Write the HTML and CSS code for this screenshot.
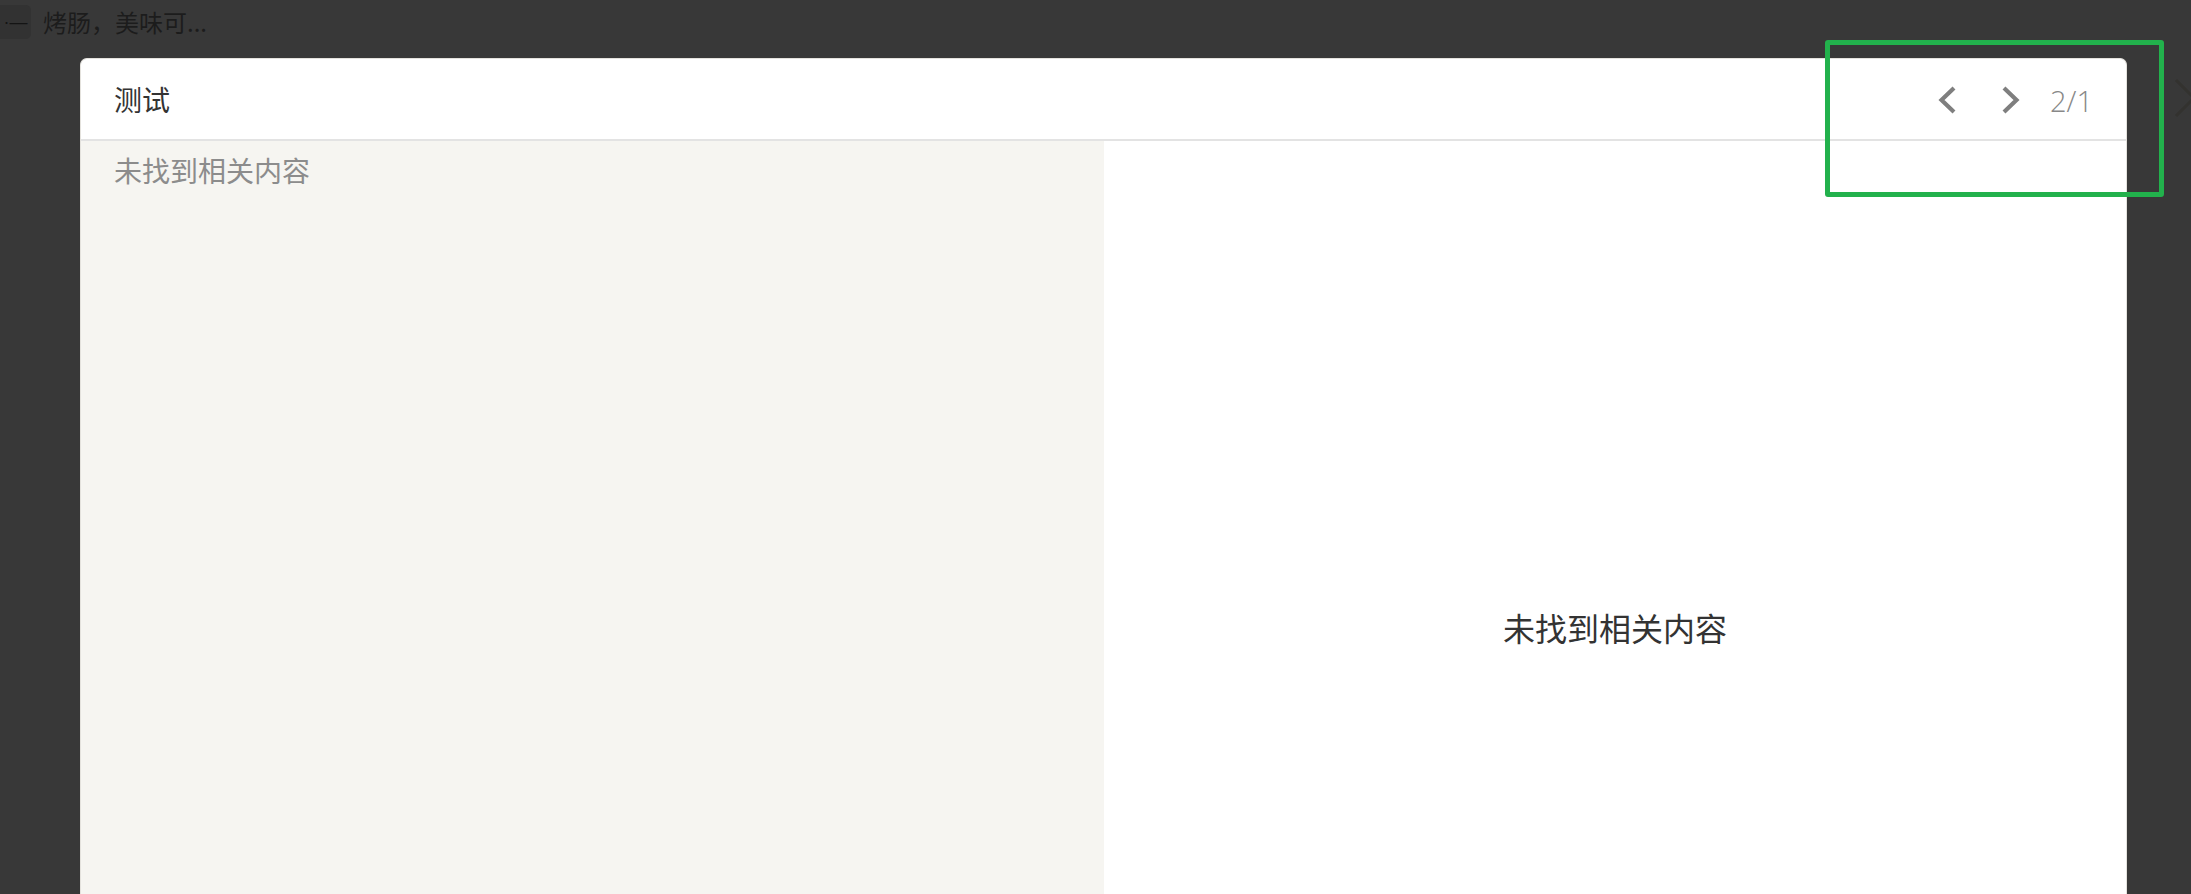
FILE: index.html
```html
<!DOCTYPE html>
<html lang="zh">
<head>
<meta charset="utf-8">
<title>测试</title>
<link rel="stylesheet" href="styles.css">
</head>
<body>
<div class="page">
  <div class="topbar">
    <span class="tag">·—</span>
    <span class="topbar-text">烤肠，美味可...</span>
  </div>
</div>

<div class="overlay">
  <div class="modal">
    <div class="modal-header">
      <div class="modal-title">测试</div>
      <div class="pager">
        <svg class="chev" width="18" height="28" viewBox="0 0 18 28"><polyline points="16,2 3.5,14 16,26" fill="none" stroke="#7f7f7f" stroke-width="4.2"/></svg>
        <svg class="chev next" width="18" height="28" viewBox="0 0 18 28"><polyline points="2,2 14.5,14 2,26" fill="none" stroke="#7f7f7f" stroke-width="4.2"/></svg>
        <span class="pager-count">2/1</span>
      </div>
    </div>
    <div class="modal-body">
      <div class="panel-left">未找到相关内容</div>
      <div class="panel-right">未找到相关内容</div>
    </div>
  </div>
  <svg class="close" width="44" height="44" viewBox="0 0 44 44"><path d="M4 4 L40 40 M40 4 L4 40" stroke="#33322f" stroke-width="3" fill="none"/></svg>
  <div class="highlight"></div>
</div>
</body>
</html>
```

FILE: styles.css
```css
html, body {
  margin: 0;
  padding: 0;
}

body {
  width: 2191px;
  height: 894px;
  overflow: hidden;
  background: #383838;
  font-family: "Noto Sans CJK SC", "Noto Sans", sans-serif;
  position: relative;
}

.topbar {
  display: flex;
  align-items: center;
  height: 44px;
  gap: 12px;
}

.tag {
  display: flex;
  align-items: center;
  justify-content: center;
  width: 31px;
  height: 34px;
  background: #323232;
  border-radius: 0 5px 5px 0;
  color: #141414;
  font-size: 18px;
  font-family: "Liberation Sans", sans-serif;
}

.topbar-text {
  font-size: 24px;
  color: #1c1c1c;
  line-height: 1;
}

.overlay {
  position: absolute;
  inset: 0;
  padding: 58px 0 0 80px;
}

.modal {
  width: 2047px;
  background: #ffffff;
  border: 1px solid #e4e2dd;
  border-bottom: none;
  border-radius: 7px 7px 0 0;
  box-sizing: border-box;
  overflow: hidden;
}

.modal-header {
  display: flex;
  align-items: center;
  justify-content: space-between;
  height: 82px;
  padding: 0 33px 0 33px;
  border-bottom: 2px solid #e3e3e3;
  box-sizing: border-box;
}

.modal-title {
  font-size: 28px;
  color: #333333;
  line-height: 1;
}

.pager {
  display: flex;
  align-items: center;
  padding-top: 2px;
}

.chev.next {
  margin-left: 46px;
}

.pager-count {
  margin-left: 30px;
  font-family: "Open Sans", sans-serif;
  font-weight: 300;
  font-size: 29px;
  color: #888888;
  line-height: 1;
}

.modal-body {
  display: grid;
  grid-template-columns: 1023px 1fr;
  height: 972px;
}

.panel-left {
  background: #f6f5f1;
  padding: 8px 33px;
  font-size: 28px;
  line-height: 42px;
  color: #8c8c8c;
}

.panel-right {
  display: flex;
  align-items: center;
  justify-content: center;
  font-size: 32px;
  color: #333333;
}

.close {
  position: absolute;
  left: 2172px;
  top: 76px;
}

.highlight {
  position: absolute;
  left: 1825px;
  top: 40px;
  width: 339px;
  height: 157px;
  border: 5px solid #22b14c;
  border-radius: 3px;
  box-sizing: border-box;
}
```
